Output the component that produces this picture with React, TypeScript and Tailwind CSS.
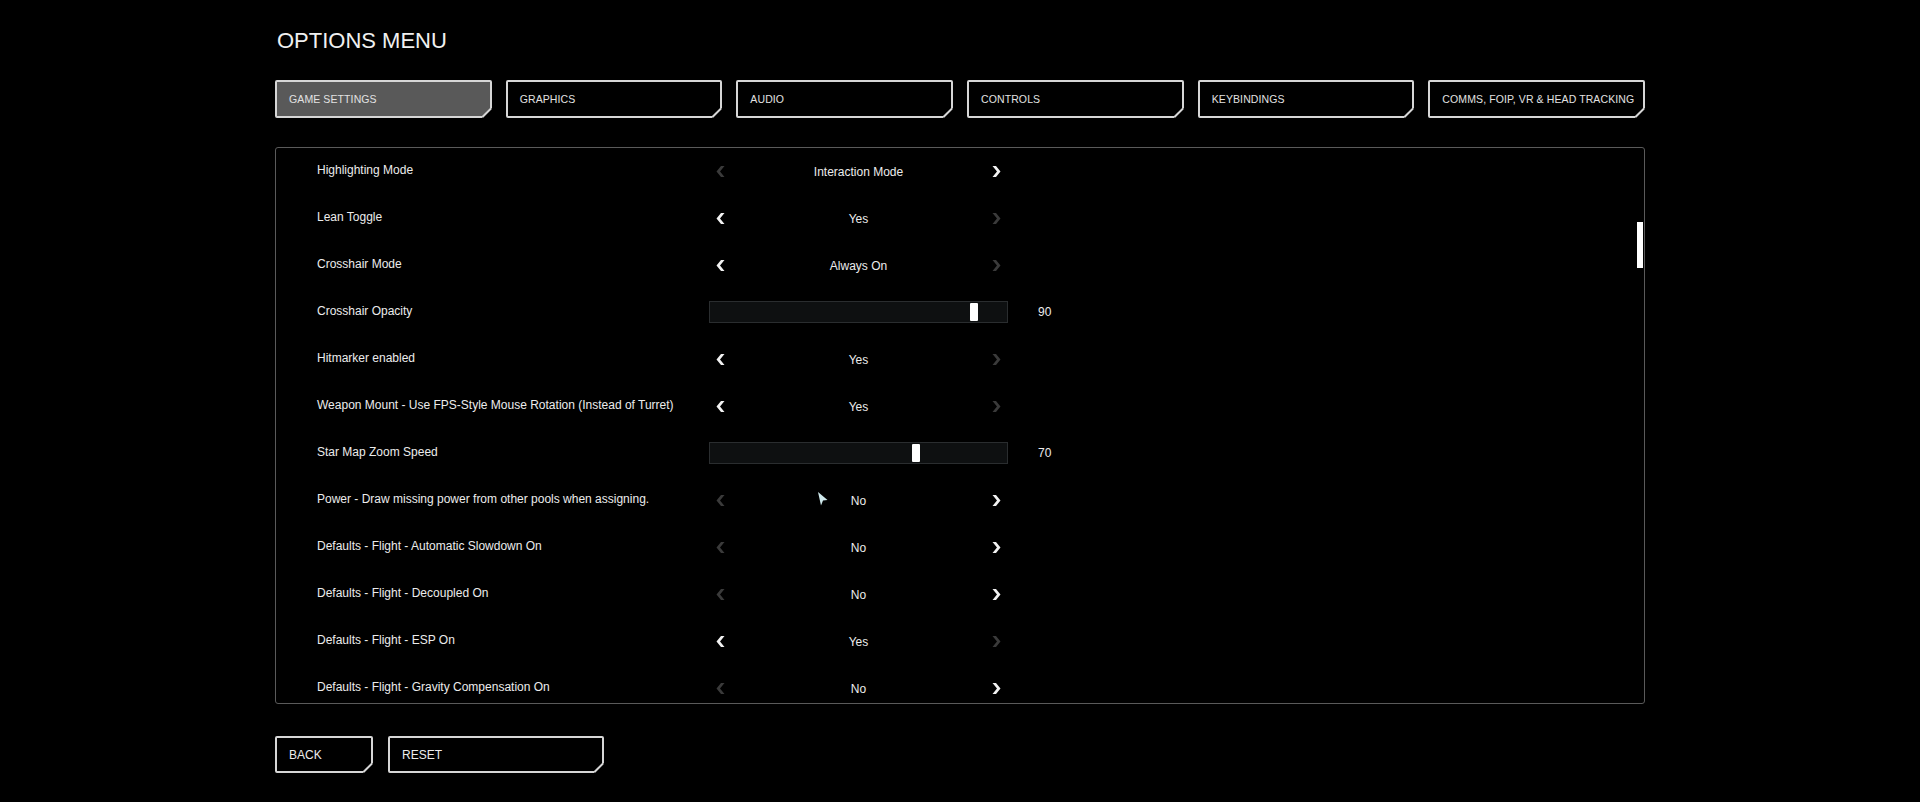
import type { ReactNode } from 'react';

type Row =
  | { label: string; kind: 'select'; value: string; left: boolean; right: boolean }
  | { label: string; kind: 'slider'; value: number };

const tabs = ['GAME SETTINGS', 'GRAPHICS', 'AUDIO', 'CONTROLS', 'KEYBINDINGS', 'COMMS, FOIP, VR & HEAD TRACKING'];

const rows: Row[] = [
  { label: 'Highlighting Mode', kind: 'select', value: 'Interaction Mode', left: false, right: true },
  { label: 'Lean Toggle', kind: 'select', value: 'Yes', left: true, right: false },
  { label: 'Crosshair Mode', kind: 'select', value: 'Always On', left: true, right: false },
  { label: 'Crosshair Opacity', kind: 'slider', value: 90 },
  { label: 'Hitmarker enabled', kind: 'select', value: 'Yes', left: true, right: false },
  { label: 'Weapon Mount - Use FPS-Style Mouse Rotation (Instead of Turret)', kind: 'select', value: 'Yes', left: true, right: false },
  { label: 'Star Map Zoom Speed', kind: 'slider', value: 70 },
  { label: 'Power - Draw missing power from other pools when assigning.', kind: 'select', value: 'No', left: false, right: true },
  { label: 'Defaults - Flight - Automatic Slowdown On', kind: 'select', value: 'No', left: false, right: true },
  { label: 'Defaults - Flight - Decoupled On', kind: 'select', value: 'No', left: false, right: true },
  { label: 'Defaults - Flight - ESP On', kind: 'select', value: 'Yes', left: true, right: false },
  { label: 'Defaults - Flight - Gravity Compensation On', kind: 'select', value: 'No', left: false, right: true },
];

// bottom-right cut corner drawn over the border
function CutCorner() {
  return (
    <svg className="absolute right-[-2px] bottom-[-2px]" width="10" height="10" viewBox="0 0 10 10">
      <polygon points="10,0 10,10 0,10" fill="#000" />
      <line x1="0.5" y1="9" x2="9" y2="0.5" stroke="#d6d6d6" strokeWidth="2" />
    </svg>
  );
}

function CutBox({ active, className, children }: { active?: boolean; className: string; children: ReactNode }) {
  return (
    <div
      className={`relative flex items-center border-2 border-[#d6d6d6] rounded-[2px] ${
        active ? 'bg-[#595959]' : 'bg-black'
      } ${className}`}
    >
      {children}
      <CutCorner />
    </div>
  );
}

function Chevron({ dir, on }: { dir: 'left' | 'right'; on: boolean }) {
  return (
    <svg width="9" height="11" viewBox="0 0 9 11" className={on ? 'text-[#f2f2f2]' : 'text-[#3a3a3a]'}>
      {dir === 'left' ? (
        <polygon points="5,0 8.5,0 4,5.5 8.5,11 5,11 0.5,5.5" fill="currentColor" />
      ) : (
        <polygon points="4,0 0.5,0 5,5.5 0.5,11 4,11 8.5,5.5" fill="currentColor" />
      )}
    </svg>
  );
}

function Slider({ value }: { value: number }) {
  return (
    <div className="relative w-[299px] h-[22px] bg-[#0e1011] border border-[#2a2d2f]">
      <div className="absolute top-[1px] bottom-[1px] w-[8px] bg-white rounded-[1px]" style={{ left: Math.round((value / 100) * 289) }} />
    </div>
  );
}

export default function App() {
  return (
    <div className="relative min-h-screen w-full bg-black text-[#e6e6e6] font-['Liberation_Sans',Arial,sans-serif]">
      <div className="ml-[275px] w-[1370px] pt-[27px]">
        <h1 className="pl-[2px] text-[22px] leading-[28px] text-[#f0f0f0]">OPTIONS MENU</h1>

        {/* Tabs */}
        <div className="mt-[25px] flex gap-[14px]">
          {tabs.map((t, i) => (
            <CutBox key={t} active={i === 0} className="flex-1 h-[38px] pl-[12px] pt-[2px]">
              <span className="text-[10.5px] tracking-[0.01em] text-[#e2e2e2] whitespace-nowrap">{t}</span>
            </CutBox>
          ))}
        </div>

        {/* Settings panel */}
        <div className="relative mt-[29px] h-[557px] overflow-hidden rounded-[3px] border border-[#5a5a5a]">
          {rows.map((r) => (
            <div key={r.label} className="flex h-[47px] items-center pl-[41px]">
              <div className="w-[392px] pb-[3px] text-[12px] text-[#ececec]">{r.label}</div>
              {r.kind === 'select' ? (
                <div className="flex w-[299px] items-center justify-between px-[7px]">
                  <Chevron dir="left" on={r.left} />
                  <span className="text-[12px] text-[#ececec]">{r.value}</span>
                  <Chevron dir="right" on={r.right} />
                </div>
              ) : (
                <>
                  <div className="pb-[2px]">
                    <Slider value={r.value} />
                  </div>
                  <span className="ml-[30px] pb-[2px] text-[12px] text-[#ececec]">{r.value}</span>
                </>
              )}
            </div>
          ))}
          <div className="absolute right-[1px] top-[74px] h-[46px] w-[6px] bg-white" />
        </div>

        {/* Footer buttons */}
        <div className="mt-[32px] flex gap-[15px]">
          <CutBox className="w-[98px] h-[37px] pl-[12px] pt-[1px]">
            <span className="text-[12px] text-[#ececec]">BACK</span>
          </CutBox>
          <CutBox className="w-[216px] h-[37px] pl-[12px]">
            <span className="text-[12px] text-[#ececec]">RESET</span>
          </CutBox>
        </div>
      </div>

      {/* mouse cursor */}
      <svg className="absolute left-[818px] top-[492px]" width="10" height="14" viewBox="0 0 10 14">
        <polygon points="0,0 9.5,8 5,8.5 3,13.5" fill="#cfe9ec" />
      </svg>
    </div>
  );
}
